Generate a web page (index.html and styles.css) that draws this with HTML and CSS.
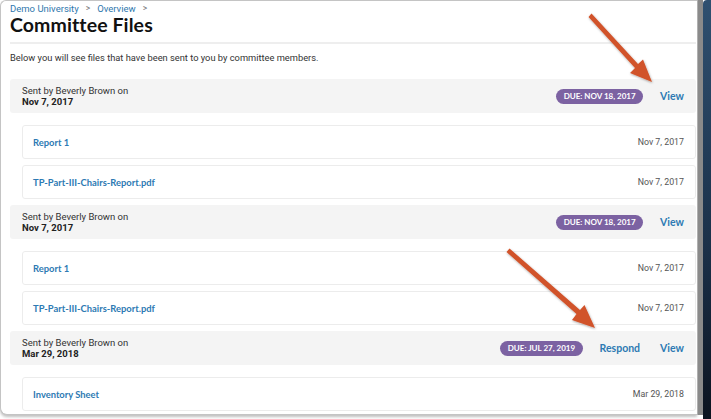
FILE: index.html
```html
<!DOCTYPE html>
<html>
<head>
<meta charset="utf-8">
<link rel="stylesheet" href="styles.css">
</head>
<body>
<div class="screen">
  <div class="window">
    <div class="content">
      <div class="breadcrumb"><a>Demo University</a><span class="sep">&gt;</span><a>Overview</a><span class="sep">&gt;</span></div>
      <h1 class="title">Committee Files</h1>
      <div class="divider"></div>
      <p class="intro">Below you will see files that have been sent to you by committee members.</p>

      <div class="group">
        <div class="ghead">
          <div class="sender"><div>Sent by Beverly Brown on</div><div class="sdate">Nov 7, 2017</div></div>
          <div class="actions"><span class="badge">DUE: NOV 18, 2017</span><a class="link">View</a></div>
        </div>
        <div class="files">
          <div class="file"><a class="fname">Report 1</a><span class="fdate">Nov 7, 2017</span></div>
          <div class="file"><a class="fname">TP-Part-III-Chairs-Report.pdf</a><span class="fdate">Nov 7, 2017</span></div>
        </div>
      </div>

      <div class="group">
        <div class="ghead">
          <div class="sender"><div>Sent by Beverly Brown on</div><div class="sdate">Nov 7, 2017</div></div>
          <div class="actions"><span class="badge">DUE: NOV 18, 2017</span><a class="link">View</a></div>
        </div>
        <div class="files">
          <div class="file"><a class="fname">Report 1</a><span class="fdate">Nov 7, 2017</span></div>
          <div class="file"><a class="fname">TP-Part-III-Chairs-Report.pdf</a><span class="fdate">Nov 7, 2017</span></div>
        </div>
      </div>

      <div class="group">
        <div class="ghead">
          <div class="sender"><div>Sent by Beverly Brown on</div><div class="sdate">Mar 29, 2018</div></div>
          <div class="actions"><span class="badge">DUE: JUL 27, 2019</span><a class="link">Respond</a><a class="link">View</a></div>
        </div>
        <div class="files">
          <div class="file"><a class="fname">Inventory Sheet</a><span class="fdate">Mar 29, 2018</span></div>
        </div>
      </div>
    </div>
  </div>
  <div class="scrollbar"></div>
  <div class="desktop"></div>

  <svg class="arrows" width="711" height="419" viewBox="0 0 711 419">
    <defs>
      <filter id="sh" x="-20%" y="-20%" width="140%" height="140%">
        <feDropShadow dx="0.5" dy="1" stdDeviation="0.8" flood-color="#000" flood-opacity="0.35"/>
      </filter>
    </defs>
    <g filter="url(#sh)" fill="#d1522a" stroke="none">
      <polygon points="588.5,17 591.5,13.5 638,64 643,59.5 652,82 630,73 635,68"/>
      <polygon points="506.5,252 509.5,248.5 580,310 584.5,305 595,328 572,320 576.5,314"/>
    </g>
  </svg>
</div>
</body>
</html>
```
FILE: styles.css
```css
* { box-sizing: border-box; }
html, body { margin: 0; padding: 0; background: #fff; }
body { width: 711px; height: 419px; overflow: hidden; font-family: Roboto, "Liberation Sans", Arial, sans-serif; color: #333; }

.screen { position: relative; display: flex; width: 711px; height: 419px; }

.window {
  width: 697px;
  height: 415px;
  background: #fff;
  border: 1px solid #c4c4c4;
  border-right: none;
  border-radius: 6px 0 0 7px;
  box-shadow: 0 2px 3px rgba(0,0,0,0.25);
  overflow: hidden;
}
.content { padding: 1px 1px 0 9px; }

.breadcrumb { font-size: 9.5px; line-height: 13px; color: #2f77ad; display: flex; align-items: center; }
.breadcrumb .sep { color: #777; margin: 0 7px; font-size: 8.5px; }

.title {
  margin: 0;
  font-family: Lato, "Open Sans", sans-serif;
  font-weight: 700;
  font-size: 19.5px;
  line-height: 20px;
  color: #111;
  letter-spacing: 0.1px;
}
.divider { height: 2px; background: #eeeeee; margin-top: 7px; }
.intro { margin: 8px 0 0; font-size: 9.3px; line-height: 12px; color: #333; }

.group { margin-top: 15px; }
.group + .group { margin-top: 6px; }

.ghead {
  height: 34px;
  background: #f4f4f4;
  border-radius: 3px;
  display: flex;
  align-items: center;
  justify-content: space-between;
  padding: 0 12px;
}
.sender { font-size: 9.5px; line-height: 11px; color: #333; }
.sdate { font-weight: 700; color: #222; }
.actions { display: flex; align-items: center; }
.badge {
  background: #7c62a2;
  color: #fff;
  font-family: Lato, sans-serif;
  font-weight: 700;
  font-size: 8px;
  line-height: 15px;
  height: 15px;
  padding: 0 7.5px;
  border-radius: 8px;
}
.link {
  color: #2d7ab3;
  font-family: Lato, sans-serif;
  font-weight: 700;
  font-size: 10.5px;
  margin-left: 17px;
}
.link + .link { margin-left: 20px; }

.files { display: flex; flex-direction: column; gap: 6px; margin: 12px 0 0 12px; }
.file {
  height: 34px;
  border: 1px solid #ececec;
  border-radius: 3px;
  display: flex;
  align-items: center;
  justify-content: space-between;
  padding: 0 11px 0 10px;
}
.fname { color: #2d7ab3; font-family: Lato, sans-serif; font-weight: 700; font-size: 9.4px; }
.fdate { color: #555; font-size: 8.8px; }

.scrollbar { width: 6px; height: 415px; background: #8a8a8a; border-left: 1px solid #b0b0b0; }
.desktop {
  width: 8px;
  height: 419px;
  background: linear-gradient(#2f5070, #1b3048 60%, #0c1420);
  border-radius: 4px 0 0 0;
}

.arrows { position: absolute; left: 0; top: 0; pointer-events: none; }
```
